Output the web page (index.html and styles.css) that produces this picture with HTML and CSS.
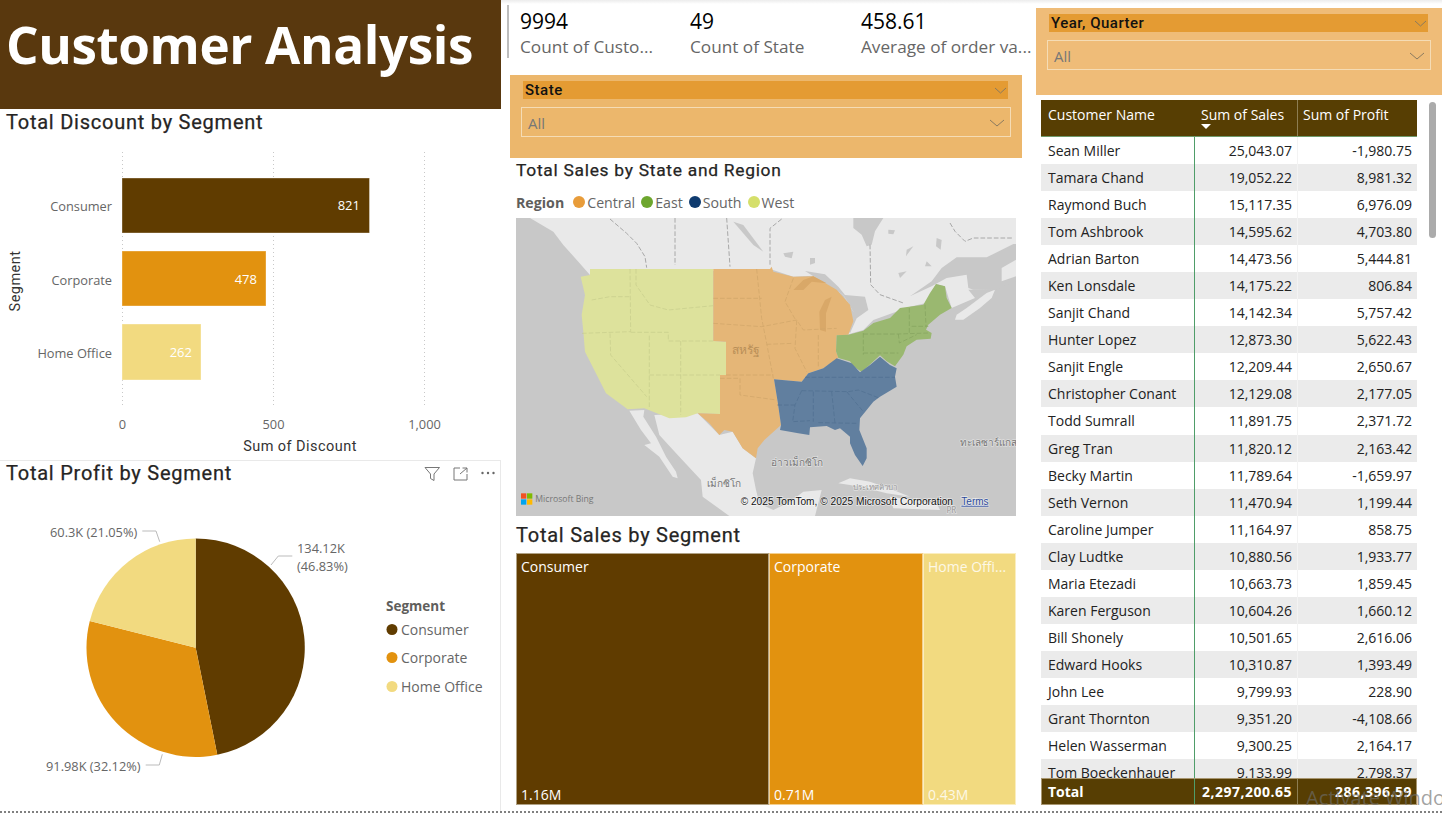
FILE: index.html
```html
<!DOCTYPE html>
<html lang="en">
<head>
<meta charset="utf-8">
<title>Customer Analysis</title>
<link rel="stylesheet" href="styles.css">
</head>
<body>
<div class="page">
  <section class="col col-left">
    <header class="banner"><h1>Customer Analysis</h1></header>
    <div class="discount">
      <h2 class="vis-title">Total Discount by Segment</h2>
      <svg class="chart" width="501" height="325" viewBox="0 135 501 325">
        <g class="grid">
          <line x1="122.5" y1="152" x2="122.5" y2="408"/>
          <line x1="273.5" y1="152" x2="273.5" y2="408"/>
          <line x1="424.5" y1="152" x2="424.5" y2="408"/>
        </g>
        <rect class="c1 edge" x="122" y="178" width="247.5" height="55"/>
        <rect class="c2 edge" x="122" y="251" width="144" height="55"/>
        <rect class="c3 edge" x="122" y="324" width="79" height="56"/>
        <g class="tick" text-anchor="end">
          <text x="112" y="211">Consumer</text>
          <text x="112" y="285">Corporate</text>
          <text x="112" y="358">Home Office</text>
        </g>
        <g class="val" text-anchor="end">
          <text x="360" y="210">821</text>
          <text x="257" y="284">478</text>
          <text x="192" y="357">262</text>
        </g>
        <g class="tick" text-anchor="middle">
          <text x="122.5" y="429">0</text>
          <text x="273.5" y="429">500</text>
          <text x="424.5" y="429">1,000</text>
        </g>
        <text class="axis" x="300" y="451" text-anchor="middle">Sum of Discount</text>
        <text class="axis" transform="translate(20 281) rotate(-90)" text-anchor="middle">Segment</text>
      </svg>
    </div>
    <div class="profit">
      <h2 class="vis-title">Total Profit by Segment</h2>
      <svg class="pie" width="500" height="350" viewBox="0 461 500 350">
        <path class="c1" d="M195.7 647.7V538.4A109.3 109.3 0 0 1 217.3 754.8Z"/>
        <path class="c2" d="M195.7 647.7L217.3 754.8A109.3 109.3 0 0 1 89.8 620.9Z"/>
        <path class="c3" d="M195.7 647.7L89.8 620.9A109.3 109.3 0 0 1 195.7 538.4Z"/>
        <g class="lead">
          <polyline points="142.3,531 156,531 159.7,541.7"/>
          <polyline points="292.3,556 278.3,556 271,565"/>
          <polyline points="145.7,765 159.3,765 162.3,754.3"/>
        </g>
        <g class="tick">
          <text x="50" y="537">60.3K (21.05%)</text>
          <text x="297" y="553">134.12K</text>
          <text x="297" y="571">(46.83%)</text>
          <text x="46" y="771">91.98K (32.12%)</text>
        </g>
        <text class="legend-title" x="386" y="611">Segment</text>
        <circle class="c1" cx="392" cy="629.5" r="5.5"/>
        <circle class="c2" cx="392" cy="657.5" r="5.5"/>
        <circle class="c3" cx="392" cy="686.5" r="5.5"/>
        <g class="legend-item">
          <text x="401" y="635">Consumer</text>
          <text x="401" y="663">Corporate</text>
          <text x="401" y="692">Home Office</text>
        </g>
        <g class="vis-icons">
          <path d="M425 467.500H439.500L434 474V480.500L430.500 478.500V474Z"/>
          <path d="M460 468H454V480H467V474M460 474L467 468M462.500 468H467V472.500"/>
        </g>
        <g class="vis-dots">
          <circle cx="482.500" cy="473" r="1.200"/>
          <circle cx="488" cy="473" r="1.200"/>
          <circle cx="493.500" cy="473" r="1.200"/>
        </g>
      </svg>
    </div>
  </section>

  <section class="col col-mid">
    <div class="cards">
      <div class="card card-a"><div class="card-num">9994</div><div class="card-label">Count of Custo...</div></div>
      <div class="card card-b"><div class="card-num">49</div><div class="card-label">Count of State</div></div>
      <div class="card card-c"><div class="card-num">458.61</div><div class="card-label">Average of order va...</div></div>
    </div>
    <div class="slicer slicer-state">
      <div class="slicer-head"><span>State</span>
        <svg width="13" height="7" viewBox="0 0 13 7"><polyline points="1,1 6.500,6 12,1"/></svg>
      </div>
      <div class="slicer-box"><span>All</span>
        <svg width="16" height="8" viewBox="0 0 16 8"><polyline points="1,1 8,7 15,1"/></svg>
      </div>
    </div>
    <div class="map-vis">
      <h2 class="vis-title map-title">Total Sales by State and Region</h2>
      <div class="map-legend">
        <b>Region</b>
        <span class="leg"><i class="dot d-central"></i>Central</span>
        <span class="leg"><i class="dot d-east"></i>East</span>
        <span class="leg"><i class="dot d-south"></i>South</span>
        <span class="leg"><i class="dot d-west"></i>West</span>
      </div>
      <svg class="map" width="500" height="298" viewBox="18 9 1500 894">
        <rect class="water" x="18" y="9" width="1500" height="894"/>
        <g class="blurred">
          <g class="land">
            <polygon points="60,9 130,50 160,90 205,140 240,180 780,162 850,185 910,182 1000,240 1030,290 1015,358 1060,345 1090,315 1200,275 1245,265 1278,207 1305,214 1325,279 1395,249 1375,224 1455,222 1518,194 1518,9 1120,9 1095,49 1085,89 1070,94 1055,59 1030,39 1030,9"/>
            <polygon points="1340,299 1335,314 1360,314 1410,279 1445,249 1455,224 1430,234 1370,279"/>
            <polygon points="358,587 393,645 423,685 403,690 448,725 488,785 503,790 498,770 468,725 438,665 400,605 403,585"/>
            <polygon points="433,600 563,595 628,660 668,650 698,700 738,730 728,775 738,825 748,865 790,885 840,860 880,830 935,825 915,903 658,903 578,845 573,795 508,725 448,660"/>
            <polygon points="985,805 1020,790 1080,800 1150,825 1200,845 1130,835 1070,820 1020,810"/>
            <polygon points="1140,845 1280,865 1290,885 1150,880"/>
          </g>
          <g class="lake">
            <polygon points="1200,244 1265,199 1295,159 1340,127 1430,127 1510,87 1518,87 1518,134 1475,159 1475,199 1518,184 1518,199 1455,224 1390,224 1375,219 1370,179 1310,189 1265,214"/>
            <polygon points="900,129 915,129 915,144 900,149"/>
            <polygon points="670,20 700,30 760,110 730,90"/>
            <polygon points="820,115 850,110 845,130 825,125"/>
            <polygon points="885,168 945,178 985,215 1005,240 1065,245 1075,285 1040,310 1020,355 1000,330 1030,290 1000,240"/>
            <polygon points="1135,44 1155,46 1150,58 1135,56"/>
            <polygon points="1190,104 1210,94 1188,124"/>
            <polygon points="1280,69 1295,75 1292,104 1278,94"/>
            <polygon points="1165,174 1190,169 1170,189"/>
            <polygon points="1250,139 1265,154 1245,154"/>
          </g>
          <g class="border-line">
            <polyline points="300,12 350,55 380,85 405,125 410,158"/>
            <polyline points="495,9 495,150"/>
            <polyline points="650,9 660,155"/>
            <polyline points="815,12 780,40 780,155"/>
            <polyline points="1080,89 1082,209 1110,239 1180,264"/>
            <polyline points="1320,24 1335,49 1365,79 1390,69 1510,69"/>
          </g>
          <polygon class="west" points="240,162 610,162 610,378 648,380 648,480 630,480 630,597 563,595 528,607 478,610 403,580 353,583 288,535 268,495 225,410 220,350 215,300 225,240 212,185 240,180"/>
          <polygon class="central" points="610,162 780,162 785,155 790,170 850,185 910,184 980,224 1020,269 1030,319 1015,359 980,361 978,409 985,429 940,460 895,475 875,500 792,493 803,560 813,630 763,675 743,700 738,730 698,700 668,650 643,645 628,660 598,625 563,595 630,597 630,480 648,480 648,380 610,378"/>
          <polygon class="central-lake" points="850,225 880,195 910,184 950,205 905,200 880,225"/>
          <polygon class="central-lake" points="930,345 928,290 945,255 965,245 948,295 948,350"/>
          <polygon class="east" points="980,361 1015,359 1060,347 1090,324 1140,309 1170,279 1240,269 1260,234 1278,207 1305,214 1310,249 1325,279 1290,299 1255,329 1248,344 1265,354 1262,371 1220,374 1190,394 1180,419 1155,454 1130,439 1110,421 1085,444 1055,471 1030,454 1020,439 985,429 978,409"/>
          <polygon class="south" points="792,493 875,500 895,475 940,460 980,430 1025,445 1050,472 1080,450 1110,425 1140,450 1160,460 1155,485 1160,515 1110,545 1090,560 1050,610 1048,645 1070,700 1070,730 1058,753 1035,720 1020,685 1020,665 990,640 975,645 950,633 900,637 898,660 865,655 810,645 813,630 803,560"/>
          <g class="state-w">
            <polyline points="360,162 362,350 215,355"/>
            <polyline points="378,162 378,210 420,270 475,285 610,272"/>
            <polyline points="245,255 300,245 360,245"/>
            <polyline points="362,352 475,352 475,378 610,378"/>
            <polyline points="300,355 302,420 410,545"/>
            <polyline points="418,362 418,580"/>
            <polyline points="512,378 512,600"/>
            <polyline points="418,480 630,480"/>
          </g>
          <g class="state-c">
            <polyline points="740,162 755,310 770,385 790,490"/>
            <polyline points="610,250 755,250"/>
            <polyline points="610,325 755,335 860,315 880,345 980,340"/>
            <polyline points="770,388 850,385"/>
            <polyline points="648,480 790,480"/>
            <polyline points="630,490 690,490 690,540 800,555"/>
            <polyline points="850,190 825,260 860,320 855,400 890,470"/>
            <polyline points="925,360 925,460"/>
          </g>
          <g class="state-e">
            <polyline points="1060,354 1060,419"/>
            <polyline points="1060,357 1165,357 1255,354"/>
            <polyline points="1198,279 1198,354"/>
            <polyline points="1245,269 1248,334"/>
            <polyline points="1205,334 1255,334"/>
            <polyline points="1165,357 1168,384 1220,359"/>
            <polyline points="1060,414 1165,414"/>
          </g>
          <g class="state-s">
            <polyline points="885,487 1155,487"/>
            <polyline points="875,527 1015,530 1045,525 1110,550"/>
            <polyline points="875,527 855,570 848,620 900,617"/>
            <polyline points="802,570 855,570"/>
            <polyline points="910,530 910,620"/>
            <polyline points="965,530 975,625"/>
            <polyline points="925,623 1042,625"/>
            <polyline points="1010,530 1060,590"/>
          </g>
        </g>
        <text class="map-label lbl-us" x="665" y="418">สหรัฐ</text>
        <text class="map-label" x="862" y="754" text-anchor="middle">อ่าวเม็กซิโก</text>
        <text class="map-label" x="642" y="815" text-anchor="middle">เม็กซิโก</text>
        <text class="map-label map-small" x="1096" y="826" text-anchor="middle">ประเทศคิวบา</text>
        <text class="map-label" x="1350" y="694">ทะเลซาร์แกสโซ</text>
        <text class="map-label map-small" x="1324" y="893" text-anchor="middle">PR</text>
        <g>
          <rect x="33" y="835" width="16" height="16" fill="#f25022"/>
          <rect x="51" y="835" width="16" height="16" fill="#7fba00"/>
          <rect x="33" y="853" width="16" height="16" fill="#00a4ef"/>
          <rect x="51" y="853" width="16" height="16" fill="#ffb900"/>
        </g>
        <text class="bing" x="76" y="861">Microsoft Bing</text>
        <text class="copy" x="692" y="869">© 2025 TomTom, © 2025 Microsoft Corporation</text>
        <text class="terms" x="1354" y="869">Terms</text>
      </svg>
    </div>
    <div class="tree-vis">
      <h2 class="vis-title tree-title">Total Sales by Segment</h2>
      <div class="treemap">
        <div class="tm tm-1"><span>Consumer</span><span>1.16M</span></div>
        <div class="tm tm-2"><span>Corporate</span><span>0.71M</span></div>
        <div class="tm tm-3"><span>Home Offi...</span><span>0.43M</span></div>
      </div>
    </div>
  </section>

  <section class="col col-right">
    <div class="slicer slicer-year">
      <div class="slicer-head"><span>Year, Quarter</span>
        <svg width="13" height="7" viewBox="0 0 13 7"><polyline points="1,1 6.500,6 12,1"/></svg>
      </div>
      <div class="slicer-box"><span>All</span>
        <svg width="16" height="8" viewBox="0 0 16 8"><polyline points="1,1 8,7 15,1"/></svg>
      </div>
    </div>
    <div class="table-vis">
      <div class="t-row t-head">
        <div class="t-name">Customer Name</div>
        <div class="t-sales"><span>Sum of Sales</span><i class="sort"></i></div>
        <div class="t-profit">Sum of Profit</div>
      </div>
      <div class="t-body">
        <div class="t-row"><div class="t-name">Sean Miller</div><div class="t-num">25,043.07</div><div class="t-num">-1,980.75</div></div>
        <div class="t-row"><div class="t-name">Tamara Chand</div><div class="t-num">19,052.22</div><div class="t-num">8,981.32</div></div>
        <div class="t-row"><div class="t-name">Raymond Buch</div><div class="t-num">15,117.35</div><div class="t-num">6,976.09</div></div>
        <div class="t-row"><div class="t-name">Tom Ashbrook</div><div class="t-num">14,595.62</div><div class="t-num">4,703.80</div></div>
        <div class="t-row"><div class="t-name">Adrian Barton</div><div class="t-num">14,473.56</div><div class="t-num">5,444.81</div></div>
        <div class="t-row"><div class="t-name">Ken Lonsdale</div><div class="t-num">14,175.22</div><div class="t-num">806.84</div></div>
        <div class="t-row"><div class="t-name">Sanjit Chand</div><div class="t-num">14,142.34</div><div class="t-num">5,757.42</div></div>
        <div class="t-row"><div class="t-name">Hunter Lopez</div><div class="t-num">12,873.30</div><div class="t-num">5,622.43</div></div>
        <div class="t-row"><div class="t-name">Sanjit Engle</div><div class="t-num">12,209.44</div><div class="t-num">2,650.67</div></div>
        <div class="t-row"><div class="t-name">Christopher Conant</div><div class="t-num">12,129.08</div><div class="t-num">2,177.05</div></div>
        <div class="t-row"><div class="t-name">Todd Sumrall</div><div class="t-num">11,891.75</div><div class="t-num">2,371.72</div></div>
        <div class="t-row"><div class="t-name">Greg Tran</div><div class="t-num">11,820.12</div><div class="t-num">2,163.42</div></div>
        <div class="t-row"><div class="t-name">Becky Martin</div><div class="t-num">11,789.64</div><div class="t-num">-1,659.97</div></div>
        <div class="t-row"><div class="t-name">Seth Vernon</div><div class="t-num">11,470.94</div><div class="t-num">1,199.44</div></div>
        <div class="t-row"><div class="t-name">Caroline Jumper</div><div class="t-num">11,164.97</div><div class="t-num">858.75</div></div>
        <div class="t-row"><div class="t-name">Clay Ludtke</div><div class="t-num">10,880.56</div><div class="t-num">1,933.77</div></div>
        <div class="t-row"><div class="t-name">Maria Etezadi</div><div class="t-num">10,663.73</div><div class="t-num">1,859.45</div></div>
        <div class="t-row"><div class="t-name">Karen Ferguson</div><div class="t-num">10,604.26</div><div class="t-num">1,660.12</div></div>
        <div class="t-row"><div class="t-name">Bill Shonely</div><div class="t-num">10,501.65</div><div class="t-num">2,616.06</div></div>
        <div class="t-row"><div class="t-name">Edward Hooks</div><div class="t-num">10,310.87</div><div class="t-num">1,393.49</div></div>
        <div class="t-row"><div class="t-name">John Lee</div><div class="t-num">9,799.93</div><div class="t-num">228.90</div></div>
        <div class="t-row"><div class="t-name">Grant Thornton</div><div class="t-num">9,351.20</div><div class="t-num">-4,108.66</div></div>
        <div class="t-row"><div class="t-name">Helen Wasserman</div><div class="t-num">9,300.25</div><div class="t-num">2,164.17</div></div>
        <div class="t-row"><div class="t-name">Tom Boeckenhauer</div><div class="t-num">9,133.99</div><div class="t-num">2,798.37</div></div>
      </div>
      <div class="t-row t-total">
        <div class="t-name">Total</div><div class="t-num">2,297,200.65</div><div class="t-num">286,396.59</div>
      </div>
    </div>
    <div class="scrollbar"></div>
  </section>
</div>
<div class="watermark">Activate Windows<small>Go to Settings to activate Windows.</small></div>
</body>
</html>
```
FILE: styles.css
```css
* { box-sizing: border-box; }
html, body { margin: 0; height: 815px; overflow: hidden; background: #fff; }
body { font-family: "Open Sans", "Noto Sans", sans-serif; color: #222; position: relative; }
h1, h2 { margin: 0; }
.page {
  display: grid; grid-template-columns: 501px 535px 406px;
  height: 813px; border-bottom: 2px dotted #808080;
}
.col { min-width: 0; height: 811px; }
.col-mid, .col-right { background: linear-gradient(#ececec, #fff 4px) no-repeat; position: relative; }

/* colours */
.c1 { fill: #603c00; } .c2 { fill: #e2920f; } .c3 { fill: #f2da80; }
.edge { stroke: #fff; stroke-opacity: .35; }

/* left */
.banner { height: 109px; background: #59380e; padding: 7px 0 0 6px; }
.banner h1 { font-size: 51.2px; line-height: 74px; font-weight: 700; color: #fff; white-space: nowrap; letter-spacing: -.4px; }
.vis-title { font-family: "Roboto", sans-serif; font-weight: 400; font-size: 20px; line-height: 26px; color: #252423; letter-spacing: .76px; white-space: nowrap; -webkit-text-stroke: .25px #252423; }
.discount { height: 351px; }
.discount .vis-title { padding-left: 6px; }
.chart, .pie, .map { display: block; }
.grid line { stroke: #c8c8c8; stroke-dasharray: 1 3; }
.tick text, .tick { font-size: 12.800px; fill: #666; }
.val { font-size: 13px; fill: #fff; }
.axis { font-family: "Roboto", sans-serif; font-size: 14.500px; letter-spacing: .45px; fill: #333; -webkit-text-stroke: .15px #333; }
.profit { height: 351px; border-top: 1px solid #e9e9e9; border-right: 1px solid #e9e9e9; position: relative; }
.profit .vis-title { position: absolute; left: 6px; top: -1px; }
.lead polyline { fill: none; stroke: #bbb; }
.legend-title { font-size: 13.500px; font-weight: 700; fill: #605e5c; }
.legend-item { font-size: 14px; fill: #666; }
.vis-icons path { fill: none; stroke: #777; }
.vis-dots circle { fill: #666; }

/* middle */
.cards { display: flex; height: 75px; padding: 6px 0 0 6px; }
.card { height: 52px; white-space: nowrap; }
.card-a { width: 183px; border-left: 2px solid #bdbdbd; padding-left: 11px; margin-top: -1px; height: 53px; padding-top: 1px; }
.card-b { width: 171px; }
.card-num { font-size: 21px; line-height: 30px; color: #000; }
.card-label { font-size: 17.200px; line-height: 22px; color: #666; }
.slicer { background: #ecb76c; }
.slicer-state { margin-left: 9px; width: 512px; height: 83px; padding: 6px 11px; }
.slicer-year { margin-top: 8px; height: 87px; padding: 6px 11px; background: #efbc78; }
.slicer-head {
  display: flex; justify-content: space-between; align-items: center;
  height: 18px; margin: 0 3px 8px 2px; background: #e49b33; padding: 0 1px 0 2px;
  font-family: "Roboto", sans-serif; font-weight: 500; font-size: 15px; letter-spacing: .5px; color: #111;
}
.slicer-box {
  display: flex; justify-content: space-between; align-items: center;
  height: 30px; border: 1px solid #f5dcb5; padding: 1px 5px 0 6px;
  font-size: 15px; color: #777;
}
.slicer svg polyline { fill: none; stroke: #8a7a5f; }
.map-vis { padding-left: 15px; }
.map-title { height: 31px; margin-top: -1px; font-size: 17.400px; letter-spacing: .72px; }
.map-legend { display: flex; align-items: center; height: 30px; padding-bottom: 2px; font-size: 14.200px; color: #666; }
.map-legend b { margin-right: 9px; color: #605e5c; }
.leg { display: flex; align-items: center; margin-right: 6px; }
.dot { width: 12px; height: 12px; border-radius: 50%; margin-right: 2px; }
.d-central { background: #e89c3a; } .d-east { background: #6da62e; } .d-south { background: #0f3b6f; } .d-west { background: #d5df6a; }
.water { fill: #c8c8c8; }
.blurred { filter: blur(1px); }
.land polygon { fill: #e9e9e9; }
.lake polygon { fill: #c8c8c8; }
.border-line polyline { fill: none; stroke: #a8a8a8; stroke-width: 3; stroke-dasharray: 14 6; }
.west { fill: #dde29c; } .central { fill: #e5b677; } .east { fill: #9ab870; } .south { fill: #617f9f; }
.central-lake { fill: #d9a868; }
.state-w polyline, .state-c polyline, .state-e polyline, .state-s polyline { fill: none; stroke-width: 2; stroke-dasharray: 14 6; }
.state-w polyline { stroke: #c6cb8b; } .state-c polyline { stroke: #cfa468; } .state-e polyline { stroke: #84a25e; } .state-s polyline { stroke: #4f6e90; }
.map-label { font-family: "Noto Sans", "DejaVu Sans", sans-serif; font-size: 30px; fill: #777; stroke: #eee; stroke-opacity: .6; stroke-width: 4px; paint-order: stroke; }
.lbl-us { fill: #b98f58; font-size: 36px; stroke: none; }
.map-small { font-size: 24px; fill: #999; }
.bing { font-family: "Open Sans", sans-serif; font-size: 26px; fill: #777; }
.copy, .terms { font-family: "Liberation Sans", sans-serif; font-size: 30.500px; stroke: #fff; stroke-opacity: .6; stroke-width: 4px; paint-order: stroke; }
.copy { fill: #111; }
.terms { font-size: 30px; fill: #2b4a9b; text-decoration: underline; }
.tree-vis { padding-left: 15px; }
.tree-title { height: 37px; padding-top: 6px; line-height: 26px; }
.treemap { display: flex; width: 500px; height: 252px; }
.tm { display: flex; flex-direction: column; justify-content: space-between; padding: 3px 4px 0; border: 1px solid #fff; color: #fff; font-size: 14px; white-space: nowrap; overflow: hidden; }
.tm-1 { width: 253px; background: #603c00; border-color: #b0a184; }
.tm-2 { width: 154px; background: #e2920f; border-color: #f4cf8e; }
.tm-3 { width: 93px; background: #f2da80; border-color: #fbeec0; color: #fdf8e6; }

/* right */
.table-vis { margin: 5px 0 0 5px; width: 376px; font-size: 14px; }
.t-row { display: grid; grid-template-columns: 154px 103px 119px; height: 27.050px; }
.t-name { padding-left: 7px; line-height: 27px; white-space: nowrap; border-right: 1px solid #4f9d69; }
.t-num { text-align: right; padding-right: 5px; line-height: 27px; white-space: nowrap; }
.t-body { height: 642px; overflow: hidden; border-top: 1px solid #6f9a6a; }
.t-body .t-row:nth-child(even) { background: #ebebeb; }
.t-body .t-num:nth-child(2) { border-right: 1px solid #f3f3f3; }
.t-head { height: 36px; background: #573e03; color: #fff; }
.t-head .t-name { line-height: 30px; border-right-color: #573e03; }
.t-sales { position: relative; padding-left: 6px; line-height: 30px; border-right: 1px solid #8d7d52; }
.t-profit { padding-left: 5px; line-height: 30px; }
.sort { position: absolute; left: 6px; top: 24px; width: 0; height: 0; border: 5.500px solid transparent; border-top: 5px solid #fff; border-bottom: 0; }
.t-total { background: #573e03; color: #fff; font-weight: 700; outline: 1px solid #a89670; outline-offset: -1px; }
.t-total .t-num { letter-spacing: .5px; }
.t-total .t-num:nth-child(2) { border-right: 1px solid #8d7d52; }
.scrollbar { position: absolute; left: 393px; top: 102px; width: 7px; height: 136px; border-radius: 4px; background: #ababab; }
.watermark { position: absolute; left: 1306px; top: 783px; width: 136px; overflow: hidden; font-size: 20px; line-height: 29px; color: rgba(110,110,110,.65); white-space: nowrap; }
.watermark small { display: block; font-size: 13px; line-height: 16px; }
```
